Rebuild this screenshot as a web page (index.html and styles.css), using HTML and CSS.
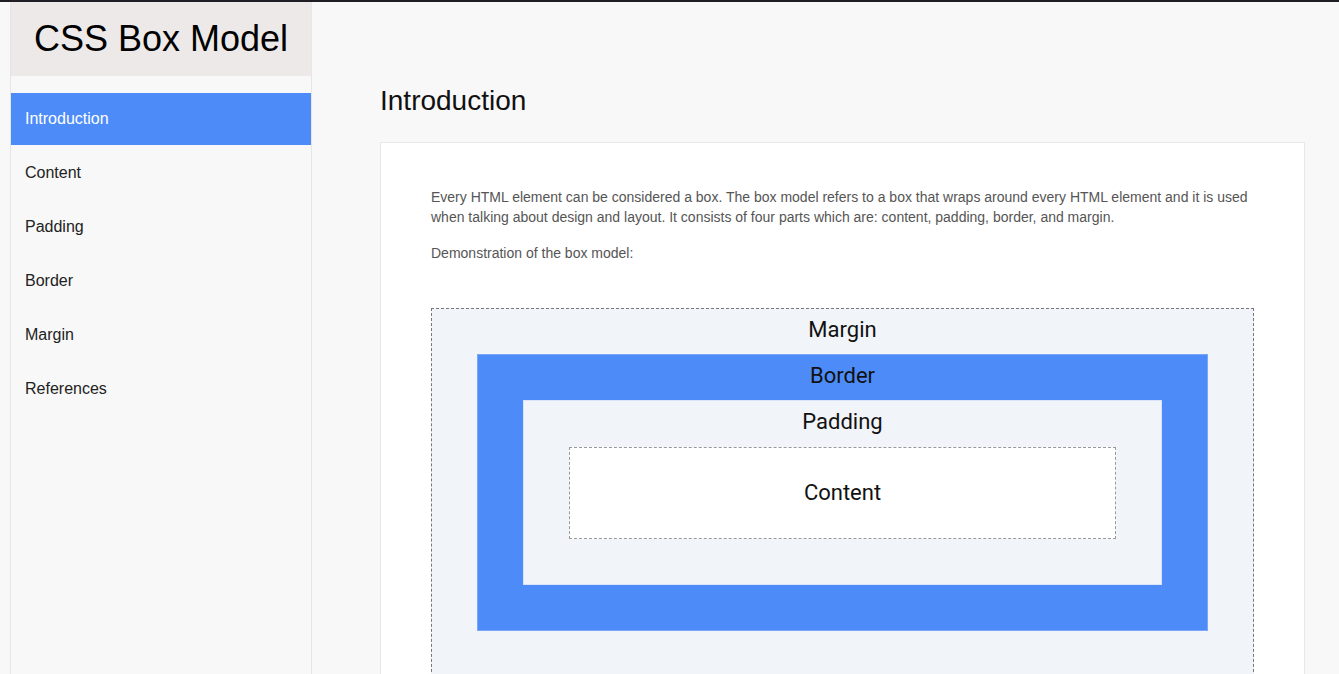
FILE: index.html
```html
<!DOCTYPE html>
<html lang="en">
<head>
<meta charset="utf-8">
<title>CSS Box Model</title>
<link rel="stylesheet" href="styles.css">
</head>
<body>
<div class="topbar"></div>
<div class="layout">
  <nav class="sidebar">
    <header class="brand">CSS Box Model</header>
    <ul class="nav">
      <li class="nav-item active">Introduction</li>
      <li class="nav-item">Content</li>
      <li class="nav-item">Padding</li>
      <li class="nav-item">Border</li>
      <li class="nav-item">Margin</li>
      <li class="nav-item">References</li>
    </ul>
  </nav>
  <main class="main">
    <h2 class="section-title">Introduction</h2>
    <section class="card">
      <p class="text">Every HTML element can be considered a box. The box model refers to a box that wraps around every HTML element and it is used when talking about design and layout. It consists of four parts which are: content, padding, border, and margin.</p>
      <p class="text">Demonstration of the box model:</p>
      <div class="demo margin-box">
        <div class="label">Margin</div>
        <div class="demo border-box">
          <div class="label">Border</div>
          <div class="demo padding-box">
            <div class="label">Padding</div>
            <div class="content-box">Content</div>
          </div>
        </div>
      </div>
    </section>
  </main>
</div>
</body>
</html>
```

FILE: styles.css
```css
* { box-sizing: border-box; }
html, body { margin: 0; padding: 0; }
body {
  background: #f8f8f8;
  font-family: "Liberation Sans", Arial, sans-serif;
  height: 674px;
  overflow: hidden;
}
.topbar {
  height: 2px;
  background: #1f1e24;
}
.layout {
  display: flex;
  align-items: flex-start;
}
.sidebar {
  margin-left: 10px;
  width: 302px;
  flex: none;
  min-height: 700px;
  background: #f8f8f8;
  border-left: 1px solid #e6e6e6;
  border-right: 1px solid #e6e6e6;
}
.brand {
  height: 74px;
  background: #ede9e8;
  font-size: 36px;
  color: #000;
  display: flex;
  align-items: center;
  justify-content: center;
  padding-bottom: 1px;
}
.nav {
  list-style: none;
  margin: 17px 0 0;
  padding: 0;
}
.nav-item {
  height: 52px;
  margin-bottom: 2px;
  display: flex;
  align-items: center;
  padding-left: 14px;
  font-size: 16px;
  color: #222;
}
.nav-item.active {
  background: #4d8cf8;
  color: #fff;
}
.main {
  flex: 1;
  padding: 0 34px 0 68px;
}
.section-title {
  margin: 83px 0 25px;
  font-weight: normal;
  font-size: 28px;
  line-height: 32px;
  color: #111;
}
.card {
  background: #fff;
  border: 1px solid #e8e8e8;
  padding: 44px 50px 0;
  min-height: 600px;
}
.text {
  margin: 0 0 16px;
  font-size: 14px;
  line-height: 20px;
  color: #555;
}
.demo {
  font-family: Roboto, "Noto Sans", sans-serif;
  padding: 0 45px 45px;
}
.margin-box {
  margin-top: 45px;
  background: #f1f4f9;
  border: 1px dashed #777;
  padding-bottom: 60px;
}
.border-box {
  background: #4d8cf8;
  border: 1px solid #7aa8f9;
}
.padding-box {
  background: #f1f4f9;
  border: 1px solid #d9e4f8;
}
.label {
  height: 45px;
  display: flex;
  align-items: center;
  justify-content: center;
  padding-bottom: 4px;
  font-size: 22px;
  color: #111;
}
.content-box {
  height: 92px;
  background: #fff;
  border: 1px dashed #999;
  display: flex;
  align-items: center;
  justify-content: center;
  padding-bottom: 2px;
  font-size: 22px;
  color: #111;
  margin: 1px 0 0;
}
```
